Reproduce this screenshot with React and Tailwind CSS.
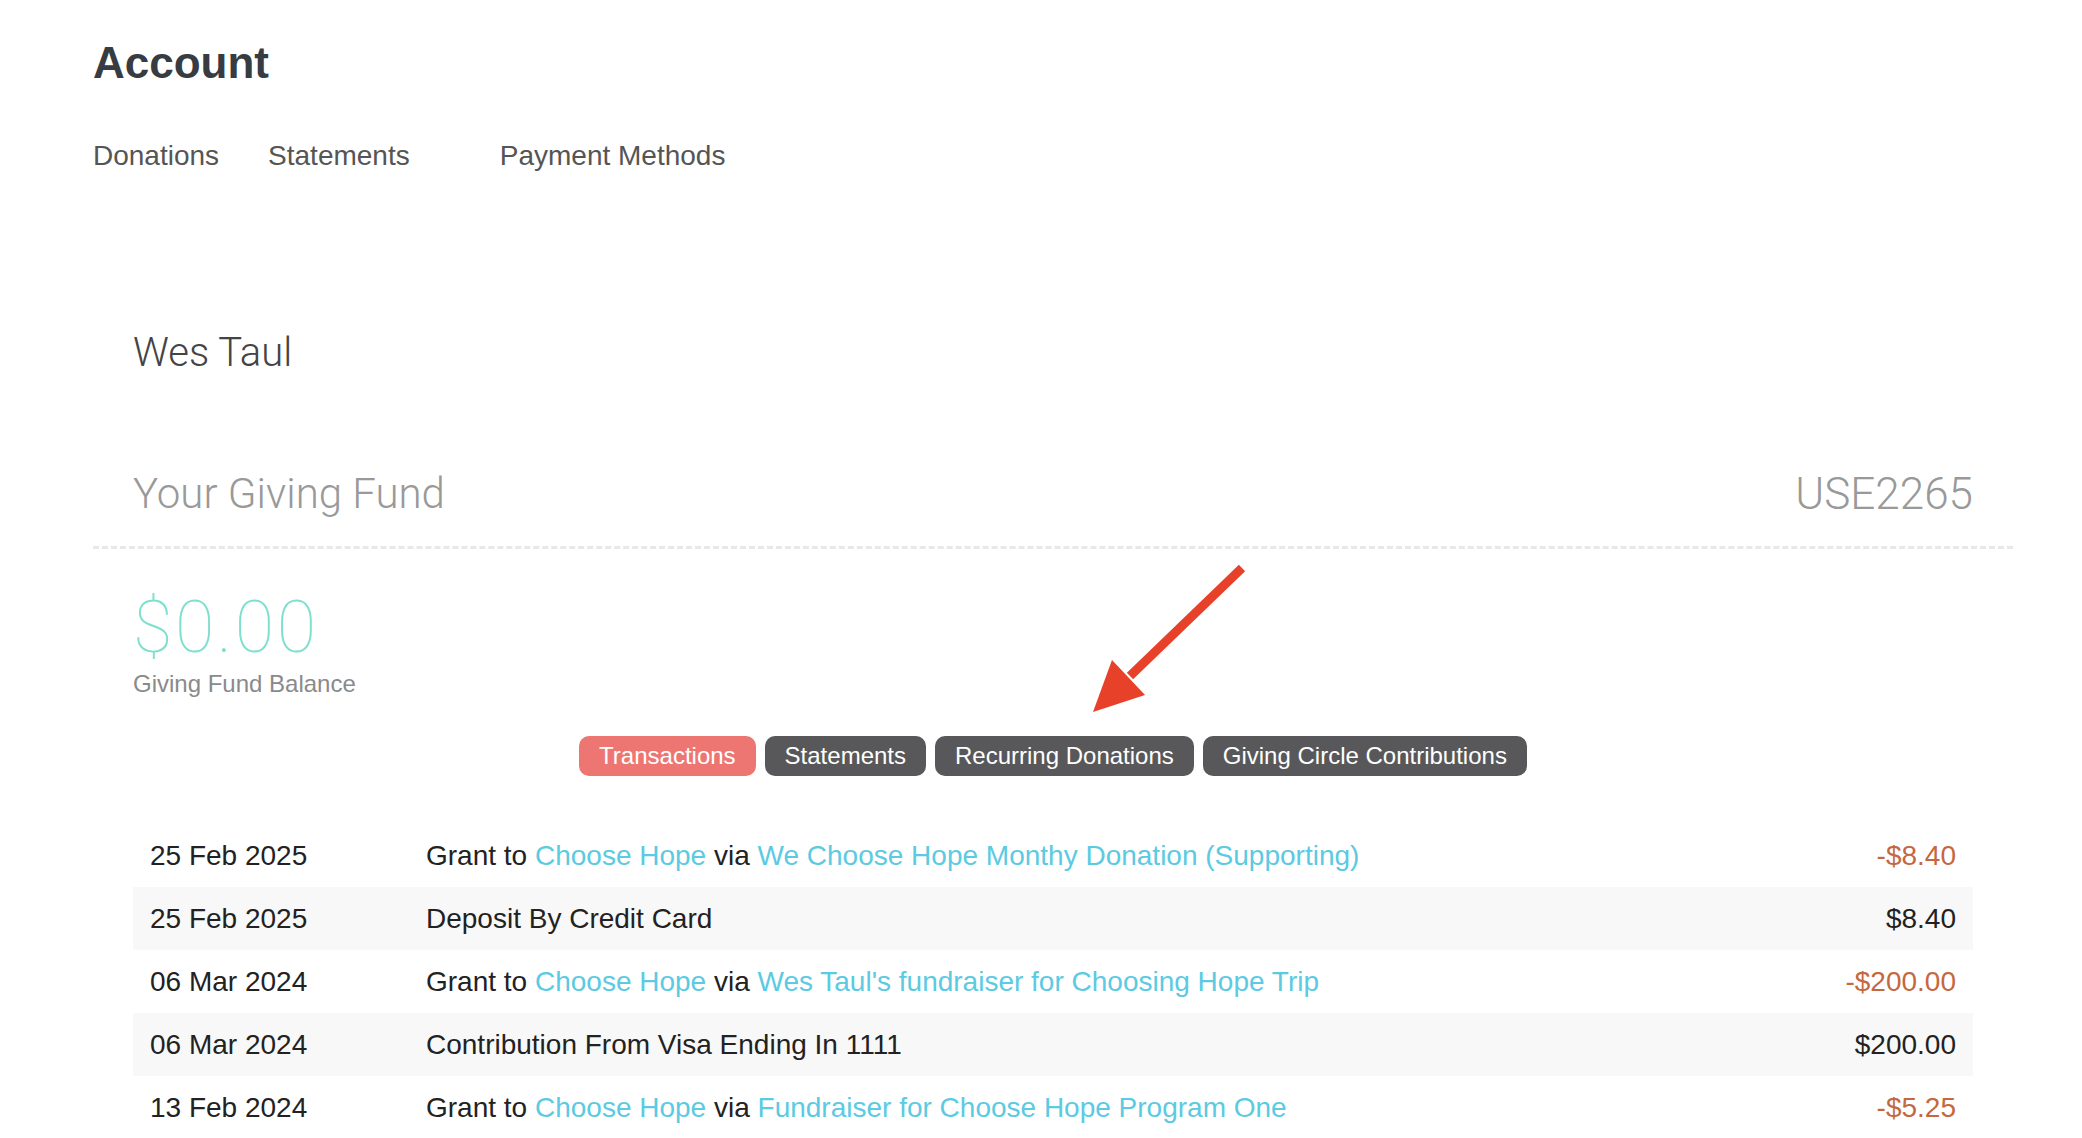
import React from "react";

const rows = [
  { date: "25 Feb 2025", kind: "grant", via: "We Choose Hope Monthy Donation (Supporting)", amount: "-$8.40", neg: true },
  { date: "25 Feb 2025", kind: "text", text: "Deposit By Credit Card", amount: "$8.40" },
  { date: "06 Mar 2024", kind: "grant", via: "Wes Taul's fundraiser for Choosing Hope Trip", amount: "-$200.00", neg: true },
  { date: "06 Mar 2024", kind: "text", text: "Contribution From Visa Ending In 1111", amount: "$200.00" },
  { date: "13 Feb 2024", kind: "grant", via: "Fundraiser for Choose Hope Program One", amount: "-$5.25", neg: true },
];

export default function App() {
  return (
    <div className="relative min-h-screen w-full bg-white font-['Liberation_Sans',Arial,sans-serif] text-[#222]">
      <div className="pl-[93px] pr-[69px] pt-[41px]">
        <h1 className="text-[44px] font-bold leading-none text-[#373c43]">Account</h1>
        <nav className="mt-[57px] flex text-[28px] leading-none text-[#555]">
          <span>Donations</span>
          <span className="ml-[49px]">Statements</span>
          <span className="ml-[90px]">Payment Methods</span>
        </nav>

        <div className="mt-[163px] px-[40px]">
          <div className="font-['Roboto','Liberation_Sans',sans-serif] text-[40px] font-light leading-none text-[#444]">
            Wes Taul
          </div>
          <div className="mt-[99px] flex items-center justify-between font-['Roboto','Liberation_Sans',sans-serif] font-light leading-none text-[#999]">
            <span className="text-[42px]">Your Giving Fund</span>
            <span className="text-[44px]">USE2265</span>
          </div>
        </div>

        <div className="mt-[30px] border-t-[3px] border-dashed border-[#e8e8e8]" />

        <div className="px-[40px]">
          <div className="mt-[43px] font-['Roboto','Liberation_Sans',sans-serif] text-[72px] font-thin leading-none tracking-[2.5px] text-[#7fdfcf]">
            $0.00
          </div>
          <div className="mt-[8px] text-[24px] leading-none text-[#8a8a8a]">Giving Fund Balance</div>

          <div className="mt-[40px] flex justify-center gap-[9px] text-[24px] text-white">
            <button className="h-[40px] rounded-[10px] bg-[#ee7672] px-[20px] leading-none">Transactions</button>
            <button className="h-[40px] rounded-[10px] bg-[#58585a] px-[20px] leading-none">Statements</button>
            <button className="h-[40px] rounded-[10px] bg-[#58585a] px-[20px] leading-none">Recurring Donations</button>
            <button className="h-[40px] rounded-[10px] bg-[#58585a] px-[20px] leading-none">Giving Circle Contributions</button>
          </div>

          <div className="mt-[48px] text-[28px] leading-none">
            {rows.map((r, i) => (
              <div
                key={i}
                className={`flex h-[63px] items-center px-[17px] ${i % 2 === 1 ? "bg-[#f8f8f8]" : "bg-white"}`}
              >
                <div className="w-[276px] shrink-0 text-[#222]">{r.date}</div>
                <div className="flex-1 text-[#222]">
                  {r.kind === "grant" ? (
                    <>
                      Grant to <span className="text-[#5bcae2]">Choose Hope</span> via{" "}
                      <span className="text-[#5bcae2]">{r.via}</span>
                    </>
                  ) : (
                    r.text
                  )}
                </div>
                <div className={r.neg ? "text-[#c5683d]" : "text-[#222]"}>{r.amount}</div>
              </div>
            ))}
          </div>
        </div>
      </div>

      <svg
        className="absolute left-[1080px] top-[550px]"
        width="180"
        height="170"
        viewBox="0 0 180 170"
      >
        <line x1="162" y1="18" x2="50" y2="126" stroke="#e8412a" strokeWidth="9" />
        <polygon points="13,162 32,110 65,145" fill="#e8412a" />
      </svg>
    </div>
  );
}
